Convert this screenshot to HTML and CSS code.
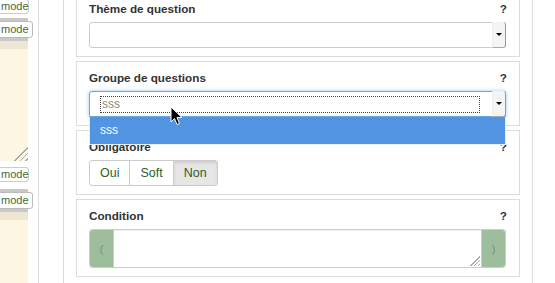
FILE: index.html
```html
<!DOCTYPE html>
<html lang="fr">
<head>
  <meta charset="UTF-8">
  <title>Question</title>
  <link rel="stylesheet" href="styles.css">
</head>
<body>

<div class="side">
  <div class="mode-btn top">mode</div>
  <div class="mode-bar"><span class="mode-btn">mode</span></div>
  <div class="beige-head"></div>
  <div class="beige-body first"><span class="grip"></span></div>
  <div class="mode-btn second">mode</div>
  <div class="mode-bar low"><span class="mode-btn">mode</span></div>
  <div class="beige-head"></div>
  <div class="beige-body"></div>
</div>

<div class="rail"></div>

<div class="main">
  <div class="panel first">
    <div class="label"><span>Thème de question</span><span class="help">?</span></div>
    <div class="select"><span class="val"></span><span class="arrow"></span></div>
  </div>

  <div class="panel drop-host">
    <div class="label"><span>Groupe de questions</span><span class="help">?</span></div>
    <div class="select focus"><span class="val"><span class="ring">sss</span></span><span class="arrow"></span></div>
    <div class="dropdown">sss</div>
    <svg class="cursor" width="13" height="20" viewBox="0 0 13 20">
      <path d="M1 1 L1 16 L4.5 12.5 L7 18.5 L9.5 17.5 L7 11.5 L12 11.5 Z" fill="#000" stroke="#fff" stroke-width="1"/>
    </svg>
  </div>

  <div class="panel">
    <div class="label"><span>Obligatoire</span><span class="help">?</span></div>
    <div class="btn-group">
      <span class="opt">Oui</span><span class="opt">Soft</span><span class="opt on">Non</span>
    </div>
  </div>

  <div class="panel">
    <div class="label"><span>Condition</span><span class="help">?</span></div>
    <div class="cond">
      <span class="addon">(</span>
      <div class="area"><span class="grip small"></span></div>
      <span class="addon">)</span>
    </div>
  </div>
</div>

</body>
</html>
```

FILE: styles.css
```css
body {
  margin: 0;
  background: #fff;
  font-family: "Liberation Sans", Arial, sans-serif;
  font-size: 12px;
  color: #333;
  display: flex;
  height: 283px;
  overflow: hidden;
}
.side {
  width: 28px;
  display: flex;
  flex-direction: column;
  flex-shrink: 0;
}
.mode-btn {
  display: block;
  background: #fff;
  border: 1px solid #ccc;
  border-radius: 3px;
  color: #3d6b38;
  font-size: 11px;
  line-height: 13px;
  height: 13px;
  margin-left: -10px;
  margin-right: -1px;
  padding: 0 3px 0 10px;
  text-align: right;
  flex-shrink: 0;
}
.side > .mode-btn.top {
  margin-top: -1px;
}
.side > .mode-btn.second {
  margin-top: 6px;
}
.mode-bar {
  margin-top: 4px;
  background: #c8c8c8;
  height: 23px;
  display: flex;
  align-items: center;
  flex-shrink: 0;
}
.mode-bar.low {
  margin-top: 7px;
}
.mode-bar .mode-btn {
  margin-right: 3px;
  border-color: #bbb;
  flex: 1;
  height: 15px;
  line-height: 15px;
}
.beige-head {
  height: 8px;
  background: #eee7d4;
  flex-shrink: 0;
}
.beige-body {
  background: #fdf6e3;
  flex: 1;
  position: relative;
}
.beige-body.first {
  flex: 0 0 112px;
}
.grip {
  position: absolute;
  right: 0;
  bottom: 0;
  width: 14px;
  height: 14px;
  background: linear-gradient(135deg, transparent 50%, #aaa 50%, #aaa 57%, transparent 57%, transparent 68%, #aaa 68%, #aaa 75%, transparent 75%, transparent 86%, #aaa 86%, #aaa 93%, transparent 93%);
}
.rail {
  margin-left: 10px;
  width: 24px;
  border-left: 1px solid #ddd;
  border-right: 1px solid #ddd;
  flex-shrink: 0;
}
.main {
  width: 444px;
  padding: 0 12px;
  border-right: 1px solid #ddd;
  flex-shrink: 0;
  margin-top: -8px;
}
.panel {
  border: 1px solid #ddd;
  padding: 8px 13px 8px 12px;
  margin-bottom: 4px;
  position: relative;
}
.label {
  display: flex;
  justify-content: space-between;
  font-weight: bold;
  font-size: 11.7px;
  line-height: 16px;
  margin-bottom: 5px;
}
.help {
  margin-right: -1px;
}
.select {
  height: 26px;
  box-sizing: border-box;
  border: 1px solid #ccc;
  border-radius: 3px;
  display: flex;
  background: #fff;
}
.select .val {
  flex: 1;
  display: flex;
  align-items: center;
  padding: 0 10px;
}
.select .arrow {
  width: 12px;
  background: #f4f4f4;
  border-left: 1px solid #eee;
  border-right: 1px solid #999;
  border-bottom: 1px solid #aaa;
  margin: -1px -1px -1px 0;
  border-radius: 0 3px 3px 0;
  position: relative;
}
.select .arrow::after {
  content: "";
  position: absolute;
  left: 3px;
  top: 11px;
  border-left: 3px solid transparent;
  border-right: 3px solid transparent;
  border-top: 3px solid #000;
}
.select.focus {
  border-color: #66a8e0;
  box-shadow: 0 0 4px rgba(102, 168, 224, 0.6);
  border-radius: 3px 3px 0 0;
}
.ring {
  flex: 1;
  border: 1px dotted #444;
  color: #888;
  padding: 0 1px;
  line-height: 15px;
  margin-right: 2px;
}
.dropdown {
  position: absolute;
  left: 12px;
  right: 13px;
  top: 55px;
  height: 28px;
  box-sizing: border-box;
  background: #5294e2;
  border: 1px solid #e6eef8;
  border-top: none;
  color: #fff;
  padding-left: 10px;
  line-height: 27px;
  z-index: 5;
}
.cursor {
  position: absolute;
  left: 93px;
  top: 44px;
  z-index: 6;
}
.btn-group {
  display: inline-flex;
  border: 1px solid #ccc;
  border-radius: 3px;
  height: 26px;
  box-sizing: border-box;
}
.opt {
  display: flex;
  align-items: center;
  justify-content: center;
  color: #2f5e2a;
  font-size: 12.5px;
  padding: 0 10px;
  border-left: 1px solid #ccc;
}
.opt:first-child {
  border-left: none;
}
.opt.on {
  background: #e6e6e6;
  box-shadow: inset 0 2px 3px rgba(0, 0, 0, 0.1);
}
.cond {
  display: flex;
  height: 39px;
  border: 1px solid #ccc;
  border-radius: 3px;
  box-sizing: border-box;
}
.addon {
  width: 23px;
  background: #9dbd9d;
  color: #7a8f7a;
  font-size: 11px;
  display: flex;
  align-items: center;
  justify-content: center;
}
.cond .addon:first-child {
  border-radius: 3px 0 0 3px;
  border-right: 1px solid #ccc;
}
.cond .addon:last-child {
  border-radius: 0 3px 3px 0;
  border-left: 1px solid #ccc;
}
.area {
  flex: 1;
  position: relative;
  box-shadow: inset 0 1px 1px rgba(0, 0, 0, 0.06);
}
.grip.small {
  width: 10px;
  height: 10px;
  right: 1px;
  bottom: 1px;
}
```
